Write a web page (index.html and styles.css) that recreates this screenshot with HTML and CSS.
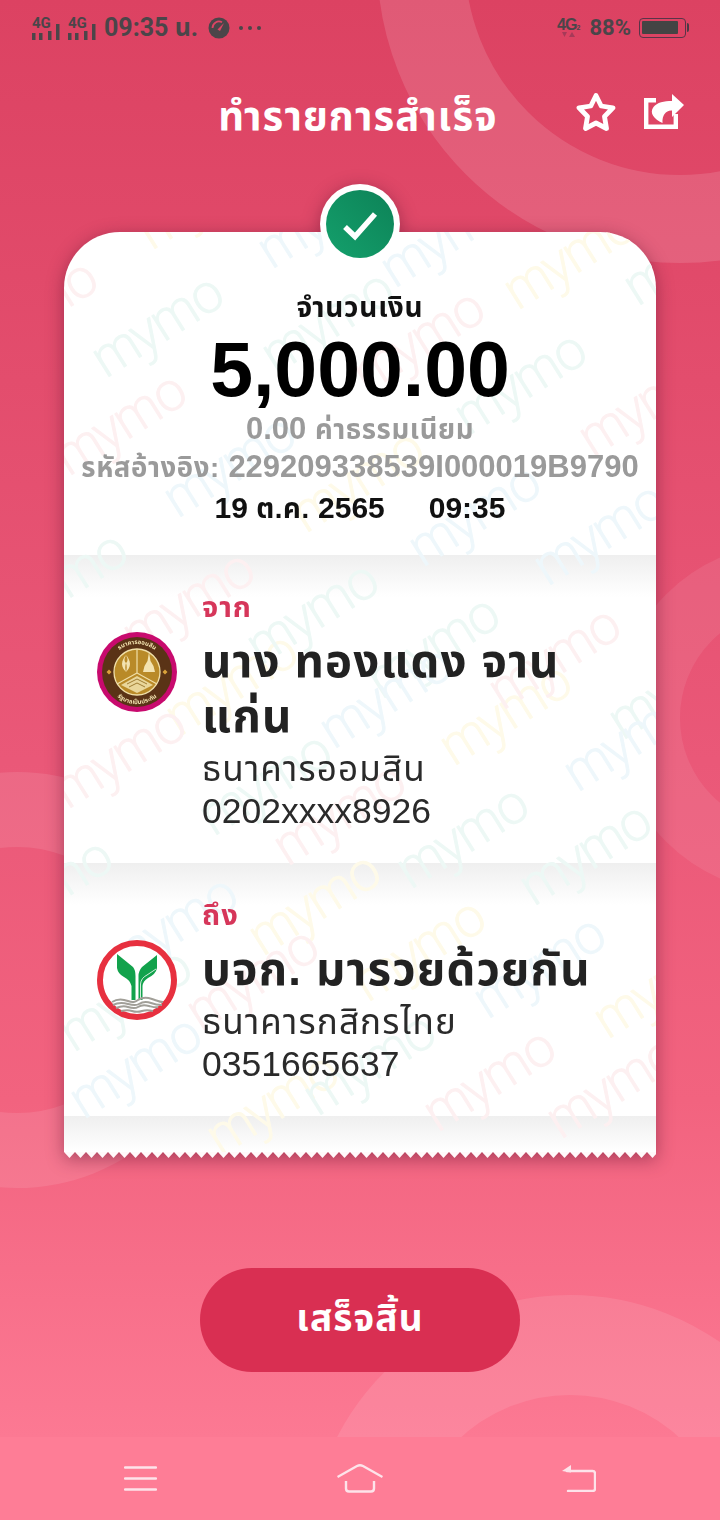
FILE: index.html
```html
<!DOCTYPE html>
<html lang="th">
<head>
<meta charset="utf-8">
<title>ทำรายการสำเร็จ</title>
<link rel="stylesheet" href="styles.css">
</head>
<body>
<div class="screen">
  <div class="decor ring-top"></div>
  <div class="decor ring-left"></div>
  <div class="decor ring-right"></div>
  <div class="decor ring-bottom"></div>

  <div class="app">
    <div class="status">
      <div class="status-left">
        <svg class="sig" viewBox="0 0 30 26"><text x="0" y="13" class="sig-t">4G</text><rect x="0" y="18" width="3.500" height="7"/><rect x="7" y="18" width="3.500" height="7"/><rect x="16" y="16" width="3.500" height="9"/><rect x="24" y="9" width="3.500" height="16"/></svg>
        <svg class="sig" viewBox="0 0 30 26"><text x="0" y="13" class="sig-t">4G</text><rect x="0" y="18" width="3.500" height="7"/><rect x="7" y="18" width="3.500" height="7"/><rect x="16" y="16" width="3.500" height="9"/><rect x="24" y="9" width="3.500" height="16"/></svg>
        <span class="time">09:35 น.</span>
        <svg class="gauge" viewBox="0 0 22 22"><circle cx="11" cy="11" r="10.500" fill="#4b4549"/><path d="M4.500 11A6.500 6.500 0 0 1 14 5.200" fill="none" stroke="#de4464" stroke-width="1.800"/><path d="M9.500 12.500 16 6l-4 8z" fill="#de4464"/></svg>
        <span class="dots"><i></i><i></i><i></i></span>
      </div>
      <div class="status-right">
        <svg class="net" viewBox="0 0 24 24"><text x="0" y="14" class="net-t">4G</text><text x="19.500" y="14" class="net-s">2</text><path d="M5 16h5l-2.500 5zM12 21h6l-3-5z" fill="#a63a58"/></svg>
        <span class="batt-text">88%</span>
        <span class="battery"><span class="battery-fill"></span></span>
      </div>
    </div>

    <header class="head">
      <h1 class="title">ทำรายการสำเร็จ</h1>
      <div class="head-icons">
        <svg class="ico-star" viewBox="0 0 40 40"><path d="M20 3.500 25.200 14 37 15.800 28.500 24.500 30.500 36.500 20 31 9.500 36.500 11.500 24.500 3 15.800 14.800 14z" fill="none" stroke="#fff" stroke-width="4.800" stroke-linejoin="round"/></svg>
        <svg class="ico-share" viewBox="0 0 40 35"><path d="M12 6.200H2.200v26.600h29.600V20" fill="none" stroke="#fff" stroke-width="4.400"/><path d="M28 0 40 11 28 23V16.500C22 16 18 21 18.500 29 10 25 5 19 9.500 13 13 8.500 20 7 28 7Z" fill="#fff"/></svg>
      </div>
    </header>

    <main class="ticket-wrap">
      <div class="badge"><svg viewBox="0 0 68 68" class="badge-svg"><defs><linearGradient id="gg" x1="0" y1="1" x2="1" y2="0"><stop offset="0" stop-color="#14a06c"/><stop offset="1" stop-color="#0d8257"/></linearGradient></defs><circle cx="34" cy="34" r="34" fill="url(#gg)"/><path d="M19 37 29 46.500 49 24" fill="none" stroke="#fff" stroke-width="5.500"/></svg></div>
      <div class="ticket">
        <svg class="water" viewBox="0 0 592 926" aria-hidden="true">
          <g class="w-yellow">
            <text transform="translate(87 19) rotate(-32)">mymo</text>
            <text transform="translate(453 79) rotate(-32)">mymo</text>
            <text transform="translate(241 302) rotate(-32)">mymo</text>
            <text transform="translate(115 505) rotate(-32)">mymo</text>
            <text transform="translate(389 535) rotate(-32)">mymo</text>
            <text transform="translate(198 725) rotate(-32)">mymo</text>
            <text transform="translate(303 771) rotate(-32)">mymo</text>
            <text transform="translate(543 808) rotate(-32)">mymo</text>
            <text transform="translate(156 925) rotate(-32)">mymo</text>
          </g>
          <g class="w-teal">
            <text transform="translate(41 147) rotate(-32)">mymo</text>
            <text transform="translate(211 143) rotate(-32)">mymo</text>
            <text transform="translate(404 204) rotate(-32)">mymo</text>
            <text transform="translate(573 75) rotate(-32)">mymo</text>
            <text transform="translate(-55 404) rotate(-32)">mymo</text>
            <text transform="translate(196 434) rotate(-32)">mymo</text>
            <text transform="translate(317 468) rotate(-32)">mymo</text>
            <text transform="translate(558 509) rotate(-32)">mymo</text>
            <text transform="translate(149 605) rotate(-32)">mymo</text>
            <text transform="translate(346 658) rotate(-32)">mymo</text>
            <text transform="translate(469 675) rotate(-32)">mymo</text>
            <text transform="translate(-70 711) rotate(-32)">mymo</text>
            <text transform="translate(9 821) rotate(-32)">mymo</text>
            <text transform="translate(253 885) rotate(-32)">mymo</text>
          </g>
          <g class="w-pink">
            <text transform="translate(-85 132) rotate(-32)">mymo</text>
            <text transform="translate(302 162) rotate(-32)">mymo</text>
            <text transform="translate(4 245) rotate(-32)">mymo</text>
            <text transform="translate(528 226) rotate(-32)">mymo</text>
            <text transform="translate(72 423) rotate(-32)">mymo</text>
            <text transform="translate(438 479) rotate(-32)">mymo</text>
            <text transform="translate(3 578) rotate(-32)">mymo</text>
            <text transform="translate(223 635) rotate(-32)">mymo</text>
            <text transform="translate(136 800) rotate(-32)">mymo</text>
            <text transform="translate(373 901) rotate(-32)">mymo</text>
            <text transform="translate(496 908) rotate(-32)">mymo</text>
          </g>
          <g class="w-blue">
            <text transform="translate(207 38) rotate(-32)">mymo</text>
            <text transform="translate(330 57) rotate(-32)">mymo</text>
            <text transform="translate(113 287) rotate(-32)">mymo</text>
            <text transform="translate(358 336) rotate(-32)">mymo</text>
            <text transform="translate(483 355) rotate(-32)">mymo</text>
            <text transform="translate(269 518) rotate(-32)">mymo</text>
            <text transform="translate(513 561) rotate(-32)">mymo</text>
            <text transform="translate(55 748) rotate(-32)">mymo</text>
            <text transform="translate(423 788) rotate(-32)">mymo</text>
            <text transform="translate(19 888) rotate(-32)">mymo</text>
          </g>
        </svg>
        <section class="summary">
          <div class="amount-label">จำนวนเงิน</div>
          <div class="amount">5,000.00</div>
          <div class="fee">0.00 <span class="th">ค่าธรรมเนียม</span></div>
          <div class="ref"><span class="th">รหัสอ้างอิง:</span> 229209338539I000019B9790</div>
          <div class="when"><span>19 <span class="th">ต.ค.</span> 2565</span><span>09:35</span></div>
        </section>
        <section class="party">
          <div class="party-logo">
            <svg class="logo" viewBox="0 0 80 80">
              <circle cx="40" cy="40" r="40" fill="#c80a6e"/>
              <circle cx="40" cy="40" r="35" fill="#5a3316"/>
              <circle cx="40" cy="40" r="23" fill="#b98a28" stroke="#f0dfa8" stroke-width="1.300"/>
              <path d="M40 17V41M40 41 20 52M40 41 60 52" stroke="#f0dfa8" stroke-width="1.200" fill="none"/>
              <path d="M29 23c2 4 2 6 0 8-1 3-1 6 0 9-2-2-4-5-4-8s2-7 4-9zM29 23c-2 4-2 6 0 8 1 3 1 6 0 9 2-2 4-5 4-8s-2-7-4-9z" fill="#f3e3b0"/>
              <path d="M52 20l1.500 9 3 5 1.500 6H46l1.500-6 3-5z" fill="#f3e3b0"/>
              <path d="M24 53l16-9 16 9-16 8z" fill="#e9d69a"/>
              <path d="M30 52l10-5 10 5M32 55l8-4 8 4" stroke="#8a6418" stroke-width=".8" fill="none"/>
              <path id="gsb-top" d="M11 41a29 29 0 0 1 58 0" fill="none"/>
              <path id="gsb-bot" d="M9 41a31 31 0 0 0 62 0" fill="none"/>
              <text class="gsb-t"><textPath href="#gsb-top" startOffset="50%" text-anchor="middle">ธนาคารออมสิน</textPath></text>
              <text class="gsb-t"><textPath href="#gsb-bot" startOffset="50%" text-anchor="middle">รัฐบาลเป็นประกัน</textPath></text>
              <path d="M9.500 40l2.500-2.500 2.500 2.500-2.500 2.500zM65.500 40l2.500-2.500 2.500 2.500-2.500 2.500z" fill="#d9a23a"/>
            </svg>
          </div>
          <div class="party-text">
            <div class="party-label">จาก</div>
            <div class="party-name">นาง ทองแดง จาน แก่น</div>
            <div class="party-bank">ธนาคารออมสิน</div>
            <div class="party-acct">0202xxxx8926</div>
          </div>
        </section>
        <section class="party party-to">
          <div class="party-logo">
            <svg class="logo" viewBox="0 0 80 80">
              <circle cx="40" cy="40" r="37" fill="#fff" stroke="#e7303f" stroke-width="6"/>
              <path d="M20 14 36 27Q38.500 30 38.500 36V60H34.500V46Q33 40 27 37 21 34 20 28Z" fill="#12a24c"/>
              <path d="M60 15V28Q59 34 51 38 46 41 45.500 46V60H41.500V36Q41.500 31 45 27Z" fill="#12a24c"/>
              <path d="M43.500 60V44Q44 38 50 35L59 29" fill="none" stroke="#fff" stroke-width=".8"/>
              <path d="M15 62c6-4 11-3 16-1s7 1 10-1 8-3 14-1 8 3 11 3M16 65c6-3 11-2 15-1s8 2 11 0 7-3 12-1 8 2 11 2M19 68c5-2 9-2 12-1s7 2 10 0 7-2 11-1 7 2 9 1M24 71c5-1 8-1 11 0s7 1 10 0 7-1 11 0" fill="none" stroke="#a19f98" stroke-width="2"/>
            </svg>
          </div>
          <div class="party-text">
            <div class="party-label">ถึง</div>
            <div class="party-name">บจก. มารวยด้วยกัน</div>
            <div class="party-bank">ธนาคารกสิกรไทย</div>
            <div class="party-acct">0351665637</div>
          </div>
        </section>
        <div class="tail"></div>
      </div>
      <svg class="teeth" width="592" height="6" aria-hidden="true"><defs><pattern id="tooth" width="11" height="6" patternUnits="userSpaceOnUse"><polygon points="0,0 11,0 5.500,6" fill="#fff9fa"/></pattern></defs><rect width="592" height="6" fill="url(#tooth)"/></svg>
    </main>

    <div class="action"><button class="done">เสร็จสิ้น</button></div>

    <nav class="nav">
      <svg class="nav-menu" viewBox="0 0 33 25"><path d="M1 1.500h31M1 12.500h31M1 23.500h31" stroke="#fde3ea" stroke-width="2.400" stroke-linecap="round"/></svg>
      <svg class="nav-home" viewBox="0 0 46 29"><path d="M.5 13 20 2q3-1.500 6 0L45.500 13" fill="none" stroke="#fde3ea" stroke-width="2.400"/><path d="M9 17v7.500q0 3 3 3h22q3 0 3-3V17" fill="none" stroke="#fde3ea" stroke-width="2.400"/></svg>
      <svg class="nav-back" viewBox="0 0 34 27"><path d="M5 6h25.500q2.500 0 2.500 2.500v15.500q0 2-2.500 2H6" fill="none" stroke="#fde3ea" stroke-width="2.400" stroke-linecap="round"/><path d="M0 6 9 0v7.500z" fill="#fde3ea"/></svg>
    </nav>
  </div>
</div>
</body>
</html>
```
FILE: styles.css
```css
* { box-sizing: border-box; }
html, body { margin: 0; padding: 0; }
body { font-family: "Liberation Sans", "Noto Sans Thai", "Noto Sans", "DejaVu Sans", sans-serif; }
.screen {
  position: relative; width: 720px; height: 1520px; overflow: hidden;
  background: linear-gradient(180deg, #dc4262 0, #ea5878 760px, #f2637f 1100px, #fc7993 1437px);
}
.decor { position: absolute; border-radius: 50%; border-style: solid; background: transparent; }
.ring-top { left: 377px; top: -343px; width: 606px; height: 606px; border-width: 88px; border-color: rgba(255,255,255,.13); }
.ring-left { left: -191px; top: 772px; width: 416px; height: 416px; border-width: 75px; border-color: rgba(255,255,255,.1); }
.ring-right { left: 615px; top: 543px; width: 350px; height: 350px; border-width: 65px; border-color: rgba(255,255,255,.08); }
.ring-bottom { left: 308px; top: 1295px; width: 524px; height: 524px; border-width: 100px; border-color: rgba(255,255,255,.1); }

.app { position: relative; display: flex; flex-direction: column; height: 100%; }

.status { height: 56px; padding: 14px 34px 0 32px; display: flex; justify-content: space-between; align-items: flex-start; color: #4b4549; }
.status-left, .status-right { display: flex; align-items: center; }
.sig { width: 30px; height: 26px; fill: #4b4549; margin-right: 6px; }
.sig-t { font: 700 15px Roboto, sans-serif; }
.time { font: 700 25px/28px Roboto, "Noto Sans Thai", sans-serif; }
.gauge { width: 22px; height: 22px; margin-left: 10px; }
.dots { display: inline-flex; gap: 5px; margin-left: 9px; }
.dots i { width: 4px; height: 4px; border-radius: 50%; background: #4b4549; }
.net { width: 24px; height: 24px; fill: #4b4549; margin-right: 8px; }
.net-t { font: 700 16px "Liberation Sans", sans-serif; letter-spacing: -1px; }
.net-s { font: 700 7px "Liberation Sans", sans-serif; }
.batt-text { font: 700 22px/28px Roboto, sans-serif; margin-right: 8px; }
.battery { position: relative; width: 47px; height: 20px; border: 1.500px solid #5a3448; border-radius: 4px; padding: 2px; display: block; }
.battery::after { content: ""; position: absolute; right: -4px; top: 4px; width: 2px; height: 9px; background: #4b3a44; border-radius: 0 2px 2px 0; }
.battery-fill { display: block; width: 36px; height: 13px; background: #444; border-radius: 1px; }

.head { position: relative; height: 120px; display: flex; justify-content: center; align-items: center; padding-right: 4px; }
.title { margin: 0; color: #fff; font-size: 40px; letter-spacing: 1.100px; font-weight: 700; line-height: 50px; }
.head-icons { position: absolute; right: 36px; top: 36px; display: flex; gap: 28px; align-items: flex-start; }
.ico-star { width: 40px; height: 40px; }
.ico-share { width: 40px; height: 35px; margin-top: 2px; }

.ticket-wrap { position: relative; margin: 56px 64px 0; filter: drop-shadow(0 4px 9px rgba(80,10,40,.45)); }
.badge { position: absolute; left: 256px; top: -48px; width: 80px; height: 80px; border-radius: 50%; background: #fff; padding: 6px; z-index: 3; }
.badge-svg { display: block; width: 68px; height: 68px; }
.ticket { position: relative; background: #fff; border-radius: 56px 56px 0 0; overflow: hidden; }
.water { position: absolute; inset: 0; width: 592px; height: 926px; z-index: 1; pointer-events: none; }
.water text { font: 300 54px "Open Sans", sans-serif; letter-spacing: -2px; stroke-width: 1px; stroke-linejoin: round; }
.w-yellow { fill: #fefae9; stroke: #fefae9; }
.w-teal { fill: #edf8f5; stroke: #edf8f5; }
.w-pink { fill: #fdf0f1; stroke: #fdf0f1; }
.w-blue { fill: #eef7fb; stroke: #eef7fb; }
.teeth { display: block; }

.summary { position: relative; z-index: 2; height: 323px; padding-top: 57px; text-align: center; }
.th { font-size: 27.500px; letter-spacing: .6px; }
.amount-label { font-size: 28px; letter-spacing: .8px; font-weight: 700; line-height: 38px; color: #111; }
.amount { font-size: 77px; font-weight: 700; line-height: 84px; color: #000; }
.fee { font-size: 31px; font-weight: 700; line-height: 36px; color: #9a9a9a; }
.ref { font-size: 31px; font-weight: 700; line-height: 37px; color: #9a9a9a; white-space: nowrap; }
.when { display: flex; justify-content: center; gap: 44px; font-size: 30px; font-weight: 700; line-height: 44px; color: #111; }

.party { position: relative; display: flex; height: 308px; background: linear-gradient(180deg, #efefef 0, #fff 42px); }
.party-to { height: 253px; }
.party > * { position: relative; z-index: 2; }
.party-logo { width: 138px; padding: 77px 0 0 33px; flex: none; }
.logo { display: block; width: 80px; height: 80px; }
.party-text { padding-top: 34px; width: 424px; }
.party-label { font-size: 29px; letter-spacing: 1px; font-weight: 700; line-height: 36px; color: #d6365a; }
.party-name { font-size: 45.500px; letter-spacing: 1.200px; font-weight: 700; line-height: 55px; color: #222; margin-top: 9px; }
.party-bank { font-size: 35px; letter-spacing: 1.200px; line-height: 43px; color: #2a2a2a; margin-top: 3px; }
.party-acct { font-size: 35.500px; line-height: 43px; color: #2a2a2a; }
.gsb-t { font: 700 6px "Noto Sans Thai", "Noto Sans", sans-serif; fill: #f3e3b0; }

.tail { position: relative; height: 36px; background: linear-gradient(180deg, #efefef 0, #fff 36px); }

.action { display: flex; justify-content: center; margin-top: 110px; }
.done { width: 320px; height: 104px; border: 0; border-radius: 52px; background: #d92f52; color: #fff; letter-spacing: 1.100px; font: 700 37px "Liberation Sans", "Noto Sans Thai", "Noto Sans", sans-serif; }

.nav { position: absolute; left: 0; right: 0; bottom: 0; height: 83px; background: #fe7d96; display: flex; align-items: center; justify-content: space-between; padding: 0 124px; }
.nav-menu { width: 33px; height: 25px; }
.nav-home { width: 46px; height: 29px; }
.nav-back { width: 34px; height: 27px; }
```
